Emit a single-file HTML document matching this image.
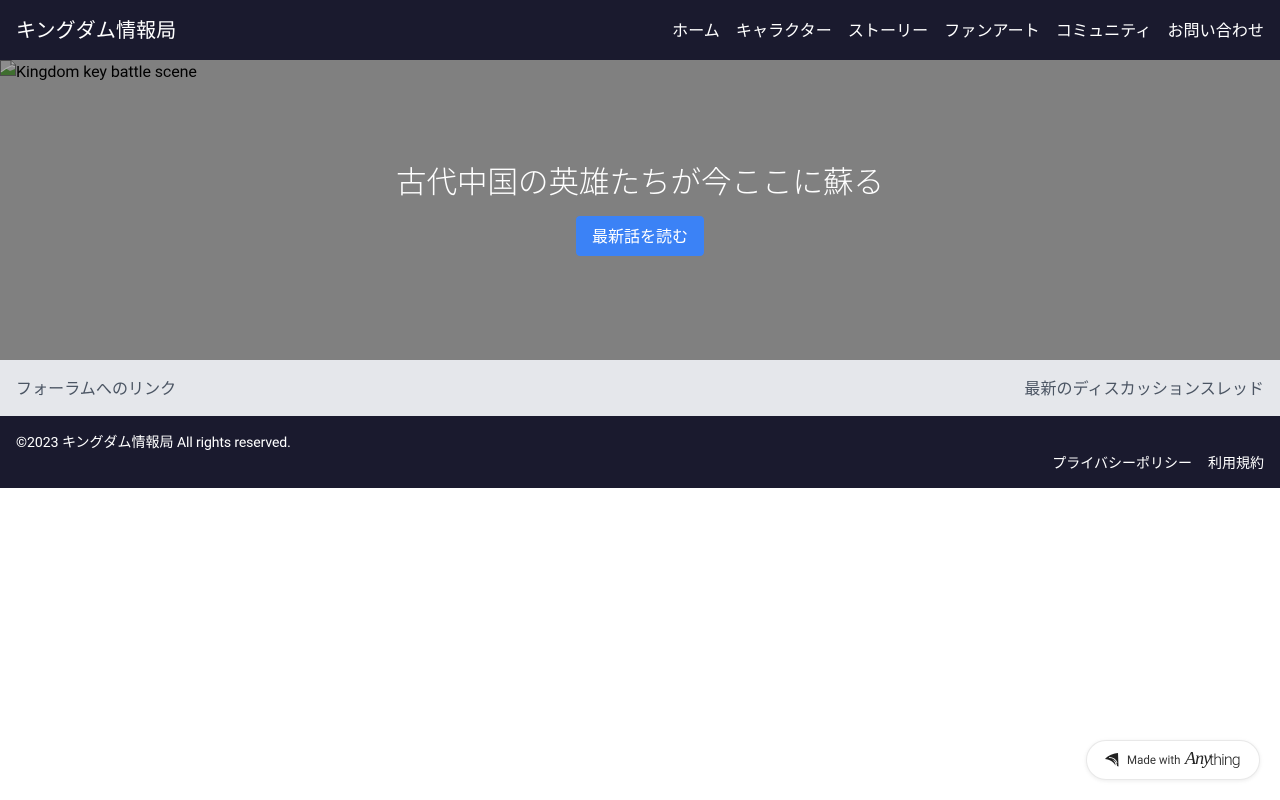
<!DOCTYPE html>
<html lang="ja">
<head>
<meta charset="utf-8">
<title>キングダム情報局</title>
<style>
*{box-sizing:border-box;margin:0;padding:0}
html,body{width:1280px;height:800px;background:#fff;overflow:hidden}
body{font-family:"Roboto","Liberation Sans","Noto Sans CJK JP",sans-serif;font-size:16px;line-height:24px;position:relative}
header{position:absolute;left:0;top:0;width:1280px;height:60px;background:#1a1a2e;color:#fff}
.logo{position:absolute;left:16px;top:16px;font-size:20px;line-height:28px;white-space:nowrap;letter-spacing:.12px}
nav{position:absolute;right:16px;top:19px;display:flex;gap:16px;white-space:nowrap;letter-spacing:.09px}
.hero{position:absolute;left:0;top:60px;width:1280px;height:300px;background:#808080}
.alt{position:absolute;left:16px;top:0;color:#000;white-space:nowrap;letter-spacing:-.08px}
.broken{position:absolute;left:0;top:0;width:16px;height:16px}
.hero h1{position:absolute;left:0;top:102px;width:1280px;text-align:center;color:#fff;font-size:30.5px;line-height:44px;font-weight:300;white-space:nowrap}
.btn{position:absolute;left:576px;top:156px;width:128px;height:40px;background:#3b82f6;color:#fff;border-radius:4px;text-align:center;line-height:41px}
.forum{position:absolute;left:0;top:360px;width:1280px;height:56px;background:#e5e7eb;color:#4b5563;padding:17px 16px 0;display:flex;justify-content:space-between;white-space:nowrap;letter-spacing:.07px}
footer{position:absolute;left:0;top:416px;width:1280px;height:72px;background:#1a1a2e;color:#fff;font-size:14px;line-height:20px}
.copy{position:absolute;left:16px;top:16.5px;white-space:nowrap}
.copy i{font-style:normal;letter-spacing:-.1px}
.links{position:absolute;right:16px;top:38px;display:flex;gap:16px;white-space:nowrap}
.badge{position:absolute;left:1086px;top:740px;width:174px;height:40px;background:#fff;border:1px solid #e8e8e8;border-radius:20px;box-shadow:0 1px 4px rgba(0,0,0,.08)}
.badge svg{position:absolute;left:18px;top:12px}
.made{position:absolute;left:40px;top:9px;font-size:11.5px;line-height:20px;color:#333;white-space:nowrap;letter-spacing:.03px}
.any{position:absolute;left:98px;top:5px;font-family:"Liberation Serif",serif;font-style:italic;font-size:18px;line-height:24px;color:#222;white-space:nowrap;letter-spacing:-.9px}
.thing{position:absolute;left:122px;top:8px;font-size:16px;line-height:22px;color:#222;letter-spacing:-.9px;white-space:nowrap;font-weight:300}
</style>
</head>
<body>
<header>
  <div class="logo">キングダム情報局</div>
  <nav><span>ホーム</span><span>キャラクター</span><span>ストーリー</span><span>ファンアート</span><span>コミュニティ</span><span>お問い合わせ</span></nav>
</header>
<section class="hero">
  <svg class="broken" viewBox="0 0 16 16" width="16" height="16"><path d="M0.5 0.5H11L15.5 5V15.5H0.5Z" fill="#8c8c8c" stroke="#4c4c4c"/><path d="M11 .5V5H15.5" fill="#a8a8a8" stroke="#4c4c4c"/><path d="M1 15V12L6 8.5L10 11L15 9V15Z" fill="#3f6e2f"/><path d="M1 12L6 8.5L12 5.5L15 7" fill="none" stroke="#b0b0b0"/></svg>
  <div class="alt">Kingdom key battle scene</div>
  <h1>古代中国の英雄たちが今ここに蘇る</h1>
  <div class="btn">最新話を読む</div>
</section>
<section class="forum"><span>フォーラムへのリンク</span><span>最新のディスカッションスレッド</span></section>
<footer>
  <div class="copy">©2023 キングダム情報局 <i>All rights reserved.</i></div>
  <div class="links"><span>プライバシーポリシー</span><span>利用規約</span></div>
</footer>
<div class="badge">
  <svg width="14" height="14" viewBox="0 0 14 14"><path d="M0 6C3 2.5 8 .5 13 0L13.5 13.5L12 13C12 10 10 7.5 7 6.5C9.5 8 10.5 10 10.5 12.5C8.5 9 5 6.5 0 6Z" fill="#222"/><path d="M4 4.6C7.5 4.2 10.8 6.3 12 10" fill="none" stroke="#fff" stroke-width=".8"/></svg>
  <span class="made">Made with</span>
  <span class="any">Any</span>
  <span class="thing">thing</span>
</div>
</body>
</html>
